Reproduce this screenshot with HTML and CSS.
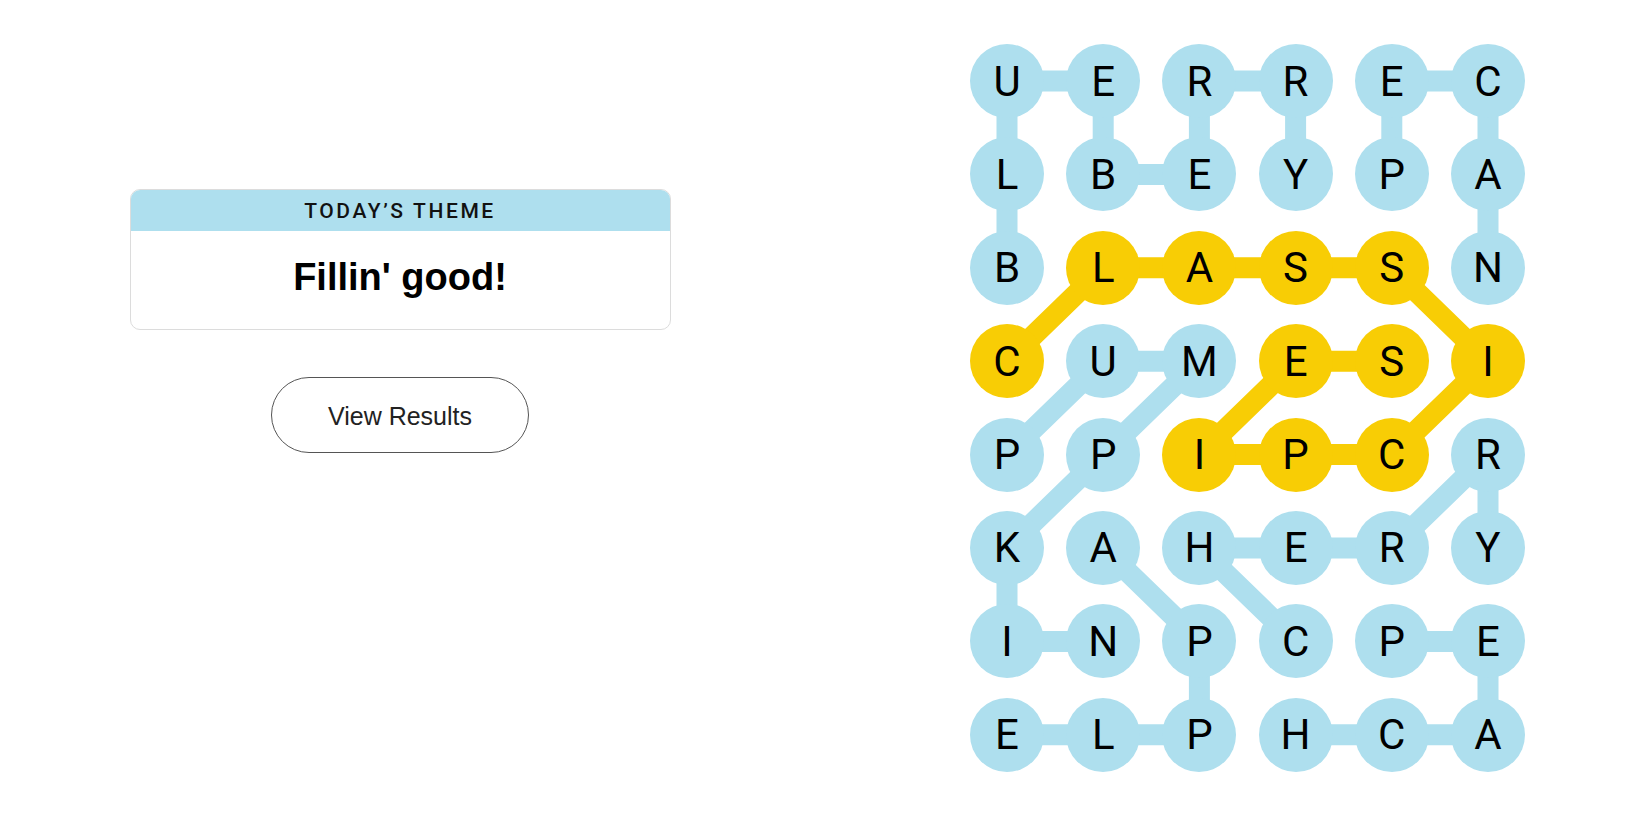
FILE: index.html
```html
<!DOCTYPE html>
<html lang="en">
<head>
<meta charset="utf-8">
<title>Strands</title>
<link rel="stylesheet" href="styles.css">
</head>
<body>
<main class="page">
  <section class="side">
    <div class="theme-card">
      <div class="theme-head">TODAY’S THEME</div>
      <div class="theme-body">Fillin' good!</div>
    </div>
    <button class="results-btn">View Results</button>
  </section>
  <section class="board">
    <svg class="links" viewBox="0 0 555 728" width="555" height="728" aria-hidden="true">
      <g fill="none" stroke="#aedfee" stroke-width="21" stroke-linejoin="round">
        <polyline points="37,223.8 37,130.4 37,37 133.2,37 133.2,130.4 229.4,130.4 229.4,37 325.6,37 325.6,130.4"/>
        <polyline points="421.8,130.4 421.8,37 518,37 518,130.4 518,223.8"/>
        <polyline points="37,410.6 133.2,317.2 229.4,317.2 133.2,410.6 37,504 37,597.4 133.2,597.4"/>
        <polyline points="133.2,504 229.4,597.4 229.4,690.8 133.2,690.8 37,690.8"/>
        <polyline points="325.6,597.4 229.4,504 325.6,504 421.8,504 518,410.6 518,504"/>
        <polyline points="421.8,597.4 518,597.4 518,690.8 421.8,690.8 325.6,690.8"/>
      </g>
      <polyline fill="none" stroke="#f8cd05" stroke-width="21" stroke-linejoin="round" points="37,317.2 133.2,223.8 229.4,223.8 325.6,223.8 421.8,223.8 518,317.2 421.8,410.6 325.6,410.6 229.4,410.6 325.6,317.2 421.8,317.2"/>
    </svg>
    <div class="grid">
      <span class="cell">U</span><span class="cell">E</span><span class="cell">R</span><span class="cell">R</span><span class="cell">E</span><span class="cell">C</span>
      <span class="cell">L</span><span class="cell">B</span><span class="cell">E</span><span class="cell">Y</span><span class="cell">P</span><span class="cell">A</span>
      <span class="cell">B</span><span class="cell span">L</span><span class="cell span">A</span><span class="cell span">S</span><span class="cell span">S</span><span class="cell">N</span>
      <span class="cell span">C</span><span class="cell">U</span><span class="cell">M</span><span class="cell span">E</span><span class="cell span">S</span><span class="cell span">I</span>
      <span class="cell">P</span><span class="cell">P</span><span class="cell span">I</span><span class="cell span">P</span><span class="cell span">C</span><span class="cell">R</span>
      <span class="cell">K</span><span class="cell">A</span><span class="cell">H</span><span class="cell">E</span><span class="cell">R</span><span class="cell">Y</span>
      <span class="cell">I</span><span class="cell">N</span><span class="cell">P</span><span class="cell">C</span><span class="cell">P</span><span class="cell">E</span>
      <span class="cell">E</span><span class="cell">L</span><span class="cell">P</span><span class="cell">H</span><span class="cell">C</span><span class="cell">A</span>
    </div>
  </section>
</main>
</body>
</html>
```
FILE: styles.css
```css
* { box-sizing: border-box; }
html, body {
  margin: 0;
  background: #ffffff;
  color: #121212;
  font-family: Roboto, "Liberation Sans", sans-serif;
}
.page {
  display: flex;
  width: 1650px;
  height: 825px;
}
.side {
  width: 800px;
  padding-top: 189px;
  display: flex;
  flex-direction: column;
  align-items: center;
}
.theme-card {
  width: 541px;
  border: 1px solid #dcdcdc;
  border-radius: 10px;
  overflow: hidden;
}
.theme-head {
  height: 41px;
  background: #aedfee;
  display: flex;
  align-items: center;
  justify-content: center;
  font-family: Roboto, "Liberation Sans", sans-serif;
  font-size: 21px;
  font-weight: 500;
  letter-spacing: 2.6px;
  color: #121212;
}
.theme-body {
  height: 98px;
  display: flex;
  align-items: center;
  justify-content: center;
  font-family: "Liberation Sans", Roboto, sans-serif;
  font-size: 38px;
  font-weight: 700;
  color: #000;
  padding-bottom: 6px;
}
.results-btn {
  margin-top: 47px;
  width: 258px;
  height: 76px;
  padding-top: 3px;
  border: 1px solid #555;
  border-radius: 38px;
  background: #fff;
  font-family: "Liberation Sans", Roboto, sans-serif;
  font-size: 25px;
  color: #222;
}
.board {
  position: relative;
  margin-left: 170px;
  margin-top: 44px;
  width: 555px;
  height: 728px;
}
.links {
  position: absolute;
  left: 0;
  top: 0;
}
.grid {
  position: relative;
  display: grid;
  grid-template-columns: repeat(6, 74px);
  grid-auto-rows: 74px;
  column-gap: 22.2px;
  row-gap: 19.4px;
}
.cell {
  width: 74px;
  height: 74px;
  border-radius: 50%;
  background: #aedfee;
  display: flex;
  align-items: center;
  justify-content: center;
  font-size: 42px;
  font-weight: 400;
  color: #000;
}
.cell.span {
  background: #f8cd05;
}
```
